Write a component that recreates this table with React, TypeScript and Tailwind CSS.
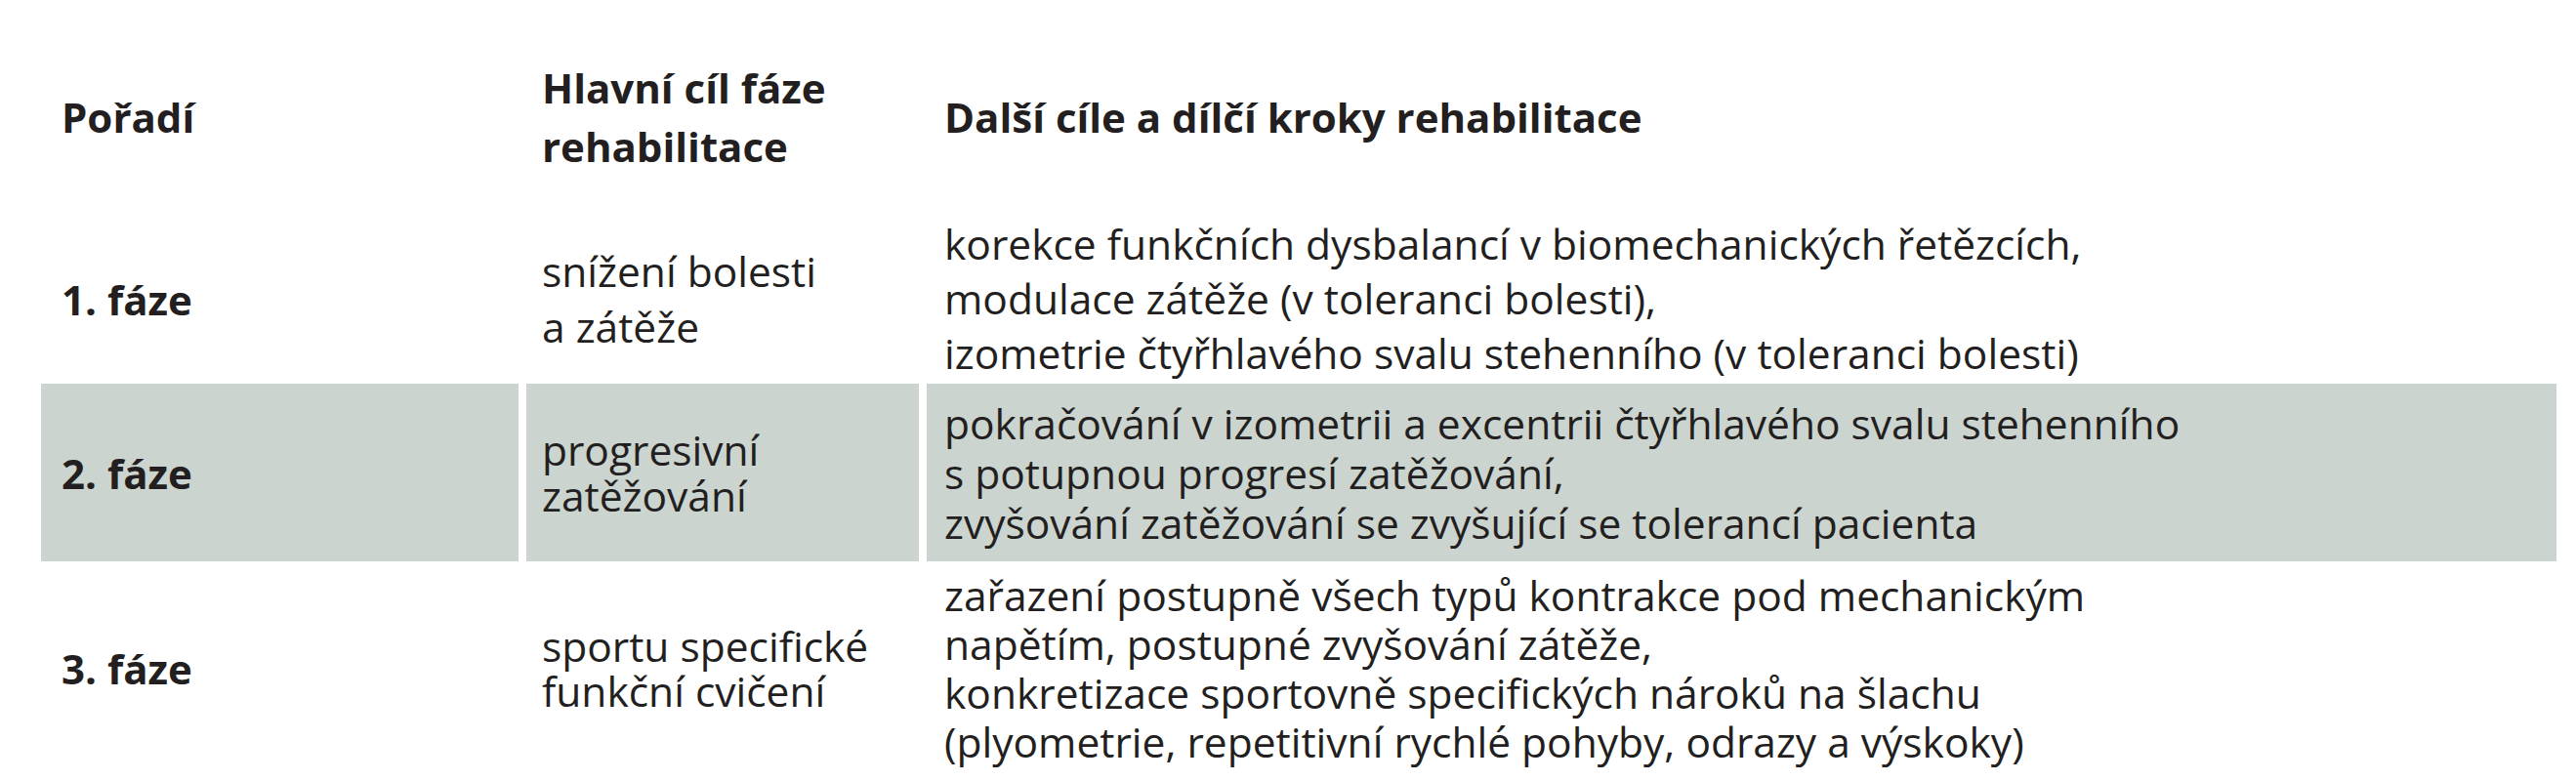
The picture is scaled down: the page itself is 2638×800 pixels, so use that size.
import React from "react";

const steps1 = [
  "korekce funkčních dysbalancí v biomechanických řetězcích,",
  "modulace zátěže (v toleranci bolesti),",
  "izometrie čtyřhlavého svalu stehenního (v toleranci bolesti)",
];
const steps2 = [
  "pokračování v izometrii a excentrii čtyřhlavého svalu stehenního",
  "s potupnou progresí zatěžování,",
  "zvyšování zatěžování se zvyšující se tolerancí pacienta",
];
const steps3 = [
  "zařazení postupně všech typů kontrakce pod mechanickým",
  "napětím, postupné zvyšování zátěže,",
  "konkretizace sportovně specifických nároků na šlachu",
  "(plyometrie, repetitivní rychlé pohyby, odrazy a výskoky)",
];

export default function App() {
  return (
    <div className="relative w-[2638px] h-[800px] bg-white text-[#231f20] font-['Open_Sans',sans-serif] overflow-hidden">
      <div className="ml-[42px] w-[2576px] flex flex-col">
        {/* header */}
        <div className="grid grid-cols-[489px_402px_1669px] gap-x-[8px] h-[205px] pt-[35px] items-center font-bold text-[42px] leading-[60px]">
          <div className="pl-[21px]">Pořadí</div>
          <div className="pl-[16px]">
            <div>Hlavní cíl fáze</div>
            <div>rehabilitace</div>
          </div>
          <div className="pl-[18px]">Další cíle a dílčí kroky rehabilitace</div>
        </div>
        {/* row 1 */}
        <div className="grid grid-cols-[489px_402px_1669px] gap-x-[8px] h-[188px] text-[42.5px]">
          <div className="flex items-center pl-[21px] pt-[14px] font-bold text-[42px]">1. fáze</div>
          <div className="flex items-center pl-[16px] pt-[14px] leading-[57px]">
            <div>
              <div>snížení bolesti</div>
              <div>a zátěže</div>
            </div>
          </div>
          <div className="flex items-center pl-[18px] pt-[14px] leading-[56px]">
            <div>
              {steps1.map((s) => (
                <div key={s}>{s}</div>
              ))}
            </div>
          </div>
        </div>
        {/* row 2 */}
        <div className="grid grid-cols-[489px_402px_1669px] gap-x-[8px] h-[182px] text-[42.5px]">
          <div className="flex items-center pl-[21px] font-bold text-[42px] bg-[#cbd4cf]">2. fáze</div>
          <div className="flex items-center pl-[16px] leading-[47px] bg-[#cbd4cf]">
            <div>
              <div>progresivní</div>
              <div>zatěžování</div>
            </div>
          </div>
          <div className="flex items-center pl-[18px] leading-[51px] bg-[#cbd4cf]">
            <div>
              {steps2.map((s) => (
                <div key={s}>{s}</div>
              ))}
            </div>
          </div>
        </div>
        {/* row 3 */}
        <div className="grid grid-cols-[489px_402px_1669px] gap-x-[8px] h-[225px] text-[42.5px]">
          <div className="flex items-center pl-[21px] pb-[6px] font-bold text-[42px]">3. fáze</div>
          <div className="flex items-center pl-[16px] pb-[6px] leading-[46px]">
            <div>
              <div>sportu specifické</div>
              <div>funkční cvičení</div>
            </div>
          </div>
          <div className="flex items-center pl-[18px] pb-[6px] leading-[50px]">
            <div>
              {steps3.map((s) => (
                <div key={s}>{s}</div>
              ))}
            </div>
          </div>
        </div>
      </div>
    </div>
  );
}
